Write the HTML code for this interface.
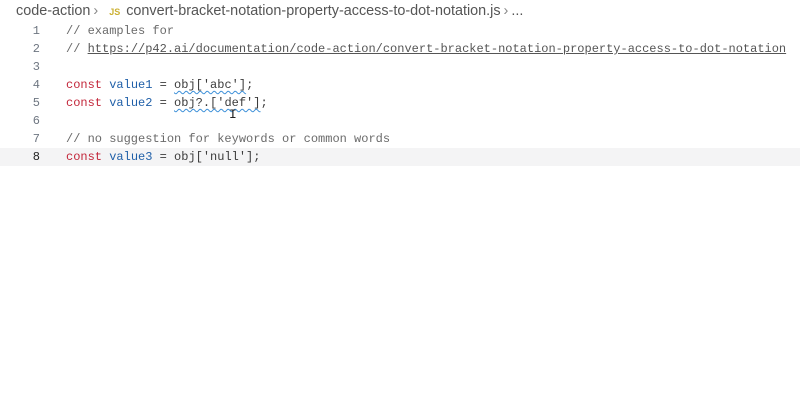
<!DOCTYPE html>
<html><head><style>
body{margin:0;width:800px;height:418px;background:#fff;overflow:hidden;position:relative;font-family:"Liberation Sans",sans-serif}
.bc{position:absolute;top:3px;left:16px;font-size:14.4px;color:#555;white-space:nowrap;line-height:17px}
.bc .js{color:#cbb032;font-size:9px;font-weight:bold;margin:0 6px 0 8px}
.bc .sep{color:#888;margin:0 3px}
.hl{position:absolute;left:0;top:148px;width:800px;height:18px;background:#f4f4f5}
.ln{position:absolute;left:0;width:40px;text-align:right;font-family:"Liberation Mono",monospace;font-size:12px;color:#6e7681;line-height:18px}
.code{position:absolute;left:66px;font-family:"Liberation Mono",monospace;font-size:12px;line-height:18px;white-space:pre;color:#3b3b3b}
.c{color:#6a6a6a}.k{color:#c3263a}.v{color:#1f5fa8}
.u{text-decoration:underline;color:#555}
.sq{text-decoration:underline wavy #3b8fd8;text-decoration-thickness:1px;text-underline-offset:2px}
</style></head><body>
<div class="bc">code-action<span class="sep">›</span><span class="js">JS</span>convert-bracket-notation-property-access-to-dot-notation.js<span class="sep">›</span>...</div>
<div class="hl"></div>
<div class="ln" style="top:22px">1<br>2<br>3<br>4<br>5<br>6<br>7<br><span style="color:#222">8</span></div>
<div class="code" style="top:22px"><span class="c">// examples for</span>
<span class="c">// <span class="u">https://p42.ai/documentation/code-action/convert-bracket-notation-property-access-to-dot-notation</span></span>

<span class="k">const</span> <span class="v">value1</span> = <span class="sq">obj['abc']</span>;
<span class="k">const</span> <span class="v">value2</span> = <span class="sq">obj?.['def']</span>;

<span class="c">// no suggestion for keywords or common words</span>
<span class="k">const</span> <span class="v">value3</span> = obj['null'];</div>
<div style="position:absolute;left:229px;top:107px;font-family:'Liberation Mono',monospace;font-size:13px;color:#222">I</div>
</body></html>
